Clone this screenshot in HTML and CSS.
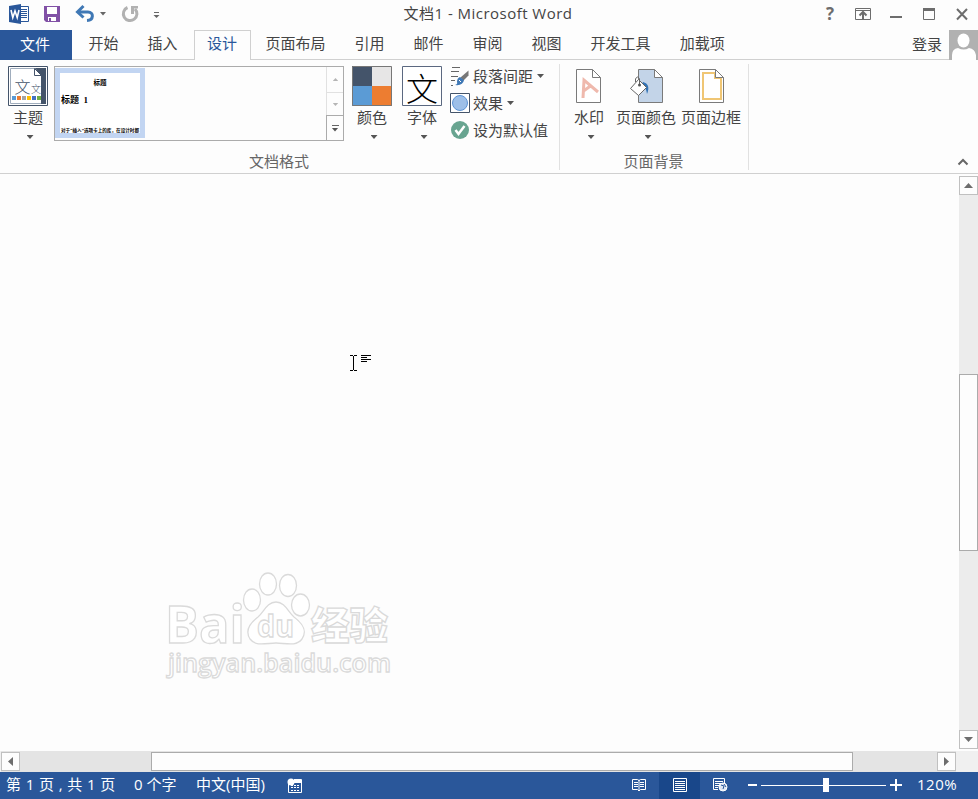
FILE: index.html
```
<!DOCTYPE html>
<html lang="zh-CN">
<head>
  <meta charset="UTF-8" />
  <meta name="viewport" content="width=device-width, initial-scale=1.0"/>
  <title>文档1 - Microsoft Word</title>
  <link rel="stylesheet" href="styles.css">
</head>
<body>
  <div class="window">
    <!-- Title bar -->
    <header class="titlebar">
      <div class="quick-access">
        <svg width="170" height="30" viewBox="0 0 170 30">
          <path d="M20 6.5h8.500v15H20z" fill="#fff" stroke="#2a579a"/>
          <path d="M21 9.500h6M21 11.500h6M21 13.500h6M21 15.500h6M21 17.500h6" stroke="#2a579a"/>
          <path d="M9 6l12-2v20L9 22z" fill="#2a579a"/>
          <path d="M11 10l1.800 7.500L15 11l2.200 6.500L19 10" fill="none" stroke="#fff" stroke-width="1.600"/>
          <path d="M44 6h16v16H46l-2-2z" fill="#8151a6"/>
          <path d="M47 7h10v7H47zM48 17h8v4h-5v-3h-2v3h-1z" fill="#fff"/>
          <path d="M78 12h10c6 0 6 8-1 8.500" fill="none" stroke="#3f78b5" stroke-width="3"/>
          <path d="M83.500 6l-6 6 6 5.500" fill="none" stroke="#3f78b5" stroke-width="3"/>
          <path d="M100 12h6l-3 3.500z" fill="#666"/>
          <path d="M127.500 7.500a6.800 6.800 0 1 0 7.500 1.500" fill="none" stroke="#b1b1b1" stroke-width="3"/>
          <path d="M131 14V6h7v2.500h-4V14z" fill="#b1b1b1"/>
          <path d="M154 12.500h5" stroke="#666"/>
          <path d="M153.500 15h6l-3 3z" fill="#666"/>
        </svg>
      </div>
      <h1 class="title">文档1 - Microsoft Word</h1>
      <div class="window-buttons">
        <span class="help">?</span>
        <svg width="138" height="30" viewBox="840 0 138 30" fill="none" stroke="#6d6d6d">
          <path d="M855.500 8.500h15v11h-15zM855 10.500h16"/>
          <path d="M863 19v-6M859.500 15.500l3.500-3.500 3.500 3.500" stroke-width="2"/>
          <path d="M890 17h12" stroke-width="2"/>
          <path d="M923.500 9v10.500h11V9"/>
          <path d="M923 9.500h12" stroke-width="3"/>
          <path d="M957 9l10 10.500M967 9l-10 10.500" stroke-width="2"/>
        </svg>
      </div>
    </header>

    <!-- Tabs -->
    <nav class="tabs">
      <a class="tab-file">文件</a>
      <a class="tab">开始</a>
      <a class="tab">插入</a>
      <a class="tab active">设计</a>
      <a class="tab">页面布局</a>
      <a class="tab">引用</a>
      <a class="tab">邮件</a>
      <a class="tab">审阅</a>
      <a class="tab">视图</a>
      <a class="tab">开发工具</a>
      <a class="tab">加载项</a>
      <span class="login">登录</span>
      <svg class="avatar" width="29" height="30" viewBox="0 0 29 30">
        <path d="M0 0h29v30H0z" fill="#b1b1b1"/>
        <ellipse cx="14.500" cy="10.500" rx="6" ry="7" fill="#fff"/>
        <path d="M3 30v-5q0-6 6-7 6 3 11 0 6 1 7 7v5z" fill="#fff"/>
      </svg>
    </nav>

    <!-- Ribbon -->
    <section class="ribbon">
      <div class="group group-format">
        <div class="group-body">
          <div class="button themes">
            <svg width="40" height="40" viewBox="0 0 40 40">
              <path d="M.5.5h39v39H.5z" fill="#fff" stroke="#44546a"/>
              <path d="M2.500 2.500h35v35h-35z" fill="#fff" stroke="#a0adbd"/>
              <path d="M27 2h11v36h-5V10z" fill="#44546a"/>
              <path d="M26.500 2.500v7h7z" fill="#fff" stroke="#44546a"/>
              <text x="6.500" y="27" class="theme-glyph" font-size="16">文</text>
              <text x="23" y="27" class="theme-glyph" font-size="10">文</text>
              <path d="M4 30h4v4H4z" fill="#5b9bd5"/>
              <path d="M9 30h4v4H9z" fill="#ed7d31"/>
              <path d="M14 30h4v4h-4z" fill="#a5a5a5"/>
              <path d="M19 30h4v4h-4z" fill="#ffc000"/>
              <path d="M24 30h4v4h-4z" fill="#4472c4"/>
              <path d="M29 30h4v4h-4z" fill="#70ad47"/>
            </svg>
            <span>主题</span>
            <i class="caret"></i>
          </div>
          <div class="gallery">
            <div class="preview">
              <div class="preview-title">标题</div>
              <div class="preview-heading">标题&nbsp; 1</div>
              <svg class="preview-line" width="80" height="6"><text x="1" y="5" textLength="78" lengthAdjust="spacingAndGlyphs">对于“插入”选项卡上的库，在设计时都</text></svg>
            </div>
            <div class="gallery-scroll">
              <span class="scroll-step"><i class="arrow-up"></i></span>
              <span class="scroll-step"><i class="arrow-down"></i></span>
              <span class="scroll-more"><i class="caret"></i></span>
            </div>
          </div>
          <div class="button colors">
            <svg width="40" height="40" viewBox="0 0 40 40">
              <path d="M0 0h20v20H0z" fill="#44546a"/>
              <path d="M20 0h20v20H20z" fill="#e7e6e6"/>
              <path d="M0 20h20v20H0z" fill="#5b9bd5"/>
              <path d="M20 20h20v20H20z" fill="#ed7d31"/>
              <path d="M.5.5h39v39H.5z" fill="none" stroke="#777"/>
            </svg>
            <span>颜色</span>
            <i class="caret"></i>
          </div>
          <div class="button fonts">
            <svg width="40" height="40" viewBox="0 0 40 40">
              <path d="M.5.5h39v39H.5z" fill="#fff" stroke="#5b6880"/>
              <text x="4" y="34.500" class="font-glyph" font-size="32">文</text>
            </svg>
            <span>字体</span>
            <i class="caret"></i>
          </div>
          <div class="small-buttons">
            <div class="small-button">
              <svg width="20" height="20" viewBox="0 0 20 20">
                <path d="M2 1.500h8M1 5.500h8M1 10.500h7M1 14.500h4M1 19.500h2" stroke="#666"/>
                <path d="M18.500 4.500v5l-5 5-3-3z" fill="#777"/>
                <path d="M10 11l4 3q-1 6-9 5 3-1 2-3 0-4 3-5z" fill="#3f78b5"/>
                <path d="M9 14l2 2" stroke="#fff"/>
              </svg>
              <span>段落间距</span><i class="caret"></i>
            </div>
            <div class="small-button">
              <svg width="20" height="20" viewBox="0 0 20 20">
                <path d="M.5.5h19v19H.5z" fill="#fff" stroke="#44546a"/>
                <circle cx="10" cy="10" r="7.500" fill="#9dbfe8" stroke="#5b93d5"/>
              </svg>
              <span>效果</span><i class="caret"></i>
            </div>
            <div class="small-button">
              <svg width="20" height="20" viewBox="0 0 20 20">
                <circle cx="10" cy="10" r="9" fill="#68a490"/>
                <path d="M5.500 10l3 4 6-8" fill="none" stroke="#fff" stroke-width="2.500"/>
              </svg>
              <span>设为默认值</span>
            </div>
          </div>
        </div>
        <div class="group-label">文档格式</div>
      </div>

      <div class="group group-background">
        <div class="group-body">
          <div class="button page-button watermark-button">
            <svg width="34" height="40" viewBox="0 0 34 40">
              <path d="M4.500 3.500h16l8 8v25h-24z" fill="#fff" stroke="#7a7a7a"/>
              <path d="M20.500 3.500v8h8" fill="none" stroke="#7a7a7a"/>
              <path d="M11 32l1-18 14 12M11.500 25l7-5" fill="none" stroke="#efb9ad" stroke-width="3"/>
            </svg>
            <span>水印</span>
            <i class="caret"></i>
          </div>
          <div class="button page-button">
            <svg width="34" height="40" viewBox="0 0 34 40">
              <path d="M9.500 3.500h16l8 8v25h-24z" fill="#c3d4e8" stroke="#7a7a7a"/>
              <path d="M25.500 3.500v8h8z" fill="#fff" stroke="#7a7a7a"/>
              <path d="M14 16q8 2 4 12-1-7-5-10z" fill="#3373b5"/>
              <path d="M1.500 22.500l8-9 8 8-8 8z" fill="#fff" stroke="#666"/>
              <path d="M6.500 16v-3q2-4 4 0v6" fill="none" stroke="#666"/>
              <circle cx="10.500" cy="19" r="1.500" fill="#555"/>
            </svg>
            <span>页面颜色</span>
            <i class="caret"></i>
          </div>
          <div class="button page-button">
            <svg width="34" height="40" viewBox="0 0 34 40">
              <path d="M5.500 3.500h16l8 8v25h-24z" fill="#fff" stroke="#7a7a7a"/>
              <path d="M9 7h12v5h6v21H9z" fill="none" stroke="#f0c674" stroke-width="2"/>
              <path d="M21.500 3.500v8h8z" fill="#fff" stroke="#7a7a7a"/>
            </svg>
            <span>页面边框</span>
          </div>
        </div>
        <div class="group-label">页面背景</div>
      </div>
      <svg class="collapse" width="12" height="8" viewBox="0 0 12 8">
        <path d="M1.500 6.500l4.500-4.500 4.500 4.500" fill="none" stroke="#666" stroke-width="2"/>
      </svg>
    </section>

    <!-- Document -->
    <main class="workspace">
      <div class="document">
        <svg class="cursor" width="22" height="17" viewBox="0 0 22 17" stroke="#000" fill="none">
          <path d="M0 .5h3M4 .5h3M3.500 1v14M0 15.500h3M4 15.500h3M11 .5h10M11 2.500h6M11 4.500h10M11 6.500h6"/>
        </svg>
        <svg class="baidu" width="240" height="120" viewBox="160 565 240 120">
          <g fill="#fff" stroke="#dadada" stroke-width="1.300">
            <text x="165" y="643" class="logo-latin" font-size="52" textLength="80" lengthAdjust="spacingAndGlyphs">Bai</text>
            <ellipse cx="252" cy="600" rx="8.500" ry="11"/>
            <ellipse cx="268" cy="584" rx="8.500" ry="11"/>
            <ellipse cx="288" cy="585.500" rx="8.500" ry="11"/>
            <ellipse cx="300.500" cy="605" rx="9" ry="11"/>
            <path d="M276 602c9 0 12 10 18 15 8 6 14 13 8 22-6 8-17 4-26 4s-20 4-26-4c-5-8 0-16 8-22 6-5 9-15 18-15z"/>
            <text x="257" y="637" class="logo-latin" font-size="31" textLength="37" lengthAdjust="spacingAndGlyphs">du</text>
            <text x="311" y="639" class="logo-cjk" font-size="38" textLength="77" lengthAdjust="spacingAndGlyphs">经验</text>
            <text x="168" y="672" class="logo-url" font-size="25" textLength="223" lengthAdjust="spacingAndGlyphs">jingyan.baidu.com</text>
          </g>
        </svg>
      </div>
      <div class="vscroll">
        <span class="scroll-button"><i class="arrow-up"></i></span>
        <span class="vthumb"></span>
        <span class="scroll-button"><i class="arrow-down"></i></span>
      </div>
    </main>
    <div class="hscroll-row">
      <div class="hscroll">
        <span class="scroll-button"><i class="arrow-left"></i></span>
        <span class="hthumb"></span>
        <span class="scroll-button"><i class="arrow-right"></i></span>
      </div>
    </div>

    <!-- Status bar -->
    <footer class="statusbar">
      <span class="status-page">第 1 页 , 共 1 页</span>
      <span class="status-words">0 个字</span>
      <span class="status-lang">中文(中国)</span>
      <svg width="16" height="16" viewBox="0 0 16 16">
        <path d="M1.500 6v8.500h13v-13H7" fill="none" stroke="#fff"/>
        <path d="M7 2h8v3H7z" fill="#fff"/>
        <circle cx="4" cy="4" r="3.500" fill="#fff"/>
        <path d="M4 7.500h9M4 9.500h9M4 12.500h9" stroke="#fff" stroke-dasharray="2 1"/>
      </svg>
      <div class="views">
        <span class="view">
          <svg width="14" height="14" viewBox="0 0 14 14" fill="none" stroke="#fff">
            <path d="M.5 1.500h5l1.500 1 1.500-1h5v10h-5L7 13l-1.500-1.500h-5zM7 2v11M2 4.500h4M2 6.500h4M2 8.500h4M8 4.500h4M8 6.500h4M8 8.500h4"/>
          </svg>
        </span>
        <span class="view current">
          <svg width="14" height="14" viewBox="0 0 14 14" fill="none" stroke="#fff">
            <path d="M.5.500h13v13H.5zM2 3.500h10M2 5.500h10M2 7.500h10M2 9.500h10M2 11.500h10"/>
          </svg>
        </span>
        <span class="view">
          <svg width="15" height="14" viewBox="0 0 15 14" fill="none" stroke="#fff">
            <path d="M5 11.500H.5V.5h11V5M2 3.500h8M2 5.500h6M2 7.500h4M2 9.500h3"/>
            <circle cx="10" cy="9" r="4" fill="#dfe7f3"/>
            <path d="M8 7l3 1-1 3M11 6l2 3" stroke="#2a579a"/>
          </svg>
        </span>
      </div>
      <svg class="zoom" width="154" height="26" viewBox="748 773 154 26" fill="#fff">
        <path d="M748 784h9v2h-9zM761 785h125v1H761zM823 778h6v14h-6zM890 784h12v2h-12zM895 779h2v12h-2z"/>
      </svg>
      <span class="percent">120%</span>
    </footer>
  </div>
</body>
</html>
```
FILE: styles.css
```
* {
  box-sizing: border-box;
}
body {
  margin: 0;
  font-family: "Open Sans", "Noto Sans CJK SC", sans-serif;
  font-size: 15px;
  line-height: 20px;
  color: #444;
}
svg {
  display: block;
  flex: none;
}
.window {
  display: flex;
  flex-direction: column;
  width: 978px;
  height: 799px;
  background: #fdfdfd;
  overflow: hidden;
  white-space: nowrap;
}

/* title bar */
.titlebar {
  display: grid;
  grid-template-columns: 1fr auto 1fr;
  height: 30px;
}
.title {
  margin: 0;
  padding: 3px 2px 0 0;
  font-size: 15px;
  font-weight: normal;
  letter-spacing: 0.47px;
}
.window-buttons {
  display: flex;
  justify-content: flex-end;
}
.help {
  width: 14px;
  padding-top: 4px;
  font-size: 17px;
  font-weight: bold;
  color: #6d6d6d;
}

/* tabs */
.tabs {
  display: flex;
  height: 30px;
  border-bottom: 1px solid #d0d0d0;
}
.tab-file {
  width: 72px;
  height: 30px;
  margin-right: 2px;
  padding: 4px 2px 0 0;
  text-align: center;
  color: #fff;
  background: #2a579a;
}
.tab {
  height: 30px;
  padding: 3px 14.5px 0;
}
.tab.active {
  margin: 0 0 0 2px;
  padding: 2px 12.5px 0 12px;
  width: 57px;
  color: #2a579a;
  background: #fdfdfd;
  border: 1px solid #d0d0d0;
  border-bottom: none;
}
.login {
  margin-left: auto;
  padding: 4px 7px 0 0;
}

/* ribbon */
.ribbon {
  display: flex;
  height: 114px;
  border-bottom: 1px solid #d0d0d0;
}
.group {
  height: 106px;
  margin-top: 4px;
  border-right: 1px solid #e1e1e1;
}
.group-format {
  width: 560px;
}
.group-background {
  width: 189px;
}
.group-body {
  display: flex;
  height: 86px;
  padding-top: 2px;
}
.group-label {
  padding: 1px 1px 0 0;
  text-align: center;
  color: #666;
}
.button {
  display: flex;
  flex-direction: column;
  align-items: center;
  width: 40px;
}
.button > span {
  margin-top: 1px;
}
.button > .caret {
  margin: 8px 0 0 4px;
}
.themes {
  margin-left: 8px;
}
.colors {
  margin-left: 8px;
}
.fonts {
  margin-left: 10px;
}
.theme-glyph {
  font-family: "Noto Sans CJK SC", sans-serif;
  font-weight: 300;
  fill: #44546a;
}
.font-glyph {
  font-family: "Noto Sans CJK SC", sans-serif;
  font-weight: 300;
  fill: #000;
}
.caret {
  flex: none;
  width: 7px;
  height: 4px;
  background: #555;
  clip-path: polygon(0 0, 100% 0, 50% 100%);
}
.gallery {
  display: flex;
  justify-content: space-between;
  width: 290px;
  height: 75px;
  margin-left: 6px;
  border: 1px solid #ababab;
}
.preview {
  width: 90px;
  height: 70px;
  margin-top: 1px;
  border: 5px solid #c2d5f2;
  background: #fff;
  font-family: "Liberation Serif", "Noto Sans CJK SC", sans-serif;
  font-weight: bold;
  color: #000;
}
.preview-title {
  height: 19px;
  text-align: center;
  font-size: 6.5px;
  line-height: 19px;
}
.preview-heading {
  height: 35px;
  padding-left: 1px;
  font-size: 9px;
  line-height: 16px;
}
.preview-line {
  font-size: 4.2px;
}
.gallery-scroll {
  display: flex;
  flex-direction: column;
  width: 17px;
}
.gallery-scroll span {
  display: flex;
  align-items: center;
  justify-content: center;
}
.scroll-step {
  height: 26px;
  border-left: 1px solid #e1e1e1;
  border-bottom: 1px solid #e1e1e1;
}
.scroll-step + .scroll-step {
  height: 22px;
  border-bottom: none;
}
.scroll-step i {
  transform: scale(0.6);
  opacity: 0.5;
}
.gallery-scroll .scroll-more {
  flex: 1;
  border-top: 1px solid #ababab;
  border-left: 1px solid #ababab;
  flex-direction: column;
  gap: 2px;
}
.scroll-more::before {
  content: "";
  width: 7px;
  height: 1px;
  background: #666;
}
.small-buttons {
  display: flex;
  flex-direction: column;
  gap: 7px;
  margin-left: 8px;
}
.small-button {
  display: flex;
  align-items: center;
  height: 20px;
}
.small-button span {
  margin: 0 4px 0 3px;
}
.page-button {
  width: auto;
  margin-left: 5px;
}
.watermark-button {
  margin: 0 5px 0 12px;
}
.collapse {
  margin: 98px 9px 0 auto;
}

/* document */
.workspace {
  display: flex;
  height: 577px;
}
.document {
  position: relative;
  flex: 1;
}
.cursor {
  position: absolute;
  left: 350px;
  top: 181px;
}
.baidu {
  position: absolute;
  left: 160px;
  top: 391px;
}
.logo-latin {
  font-family: "Open Sans", sans-serif;
  font-weight: bold;
}
.logo-cjk {
  font-family: "Noto Sans CJK SC", sans-serif;
  font-weight: 900;
}
.logo-url {
  font-family: "Open Sans", sans-serif;
  font-weight: 600;
}

/* scroll bars */
.vscroll {
  display: flex;
  flex-direction: column;
  justify-content: space-between;
  width: 19px;
  height: 573px;
  margin-top: 2px;
  background: #ececec;
}
.scroll-button {
  display: flex;
  align-items: center;
  justify-content: center;
  width: 19px;
  height: 19px;
  background: #fdfdfd;
  border: 1px solid #c0c0c0;
}
.vthumb {
  height: 177px;
  background: #fdfdfd;
  border: 1px solid #ababab;
}
.hscroll-row {
  height: 21px;
  padding-left: 1px;
  background: #f0f0f0;
}
.hscroll {
  display: flex;
  align-items: center;
  width: 955px;
  height: 21px;
  background: #e4e4e4;
}
.hthumb {
  width: 702px;
  height: 19px;
  margin: 0 auto 0 131px;
  background: #fdfdfd;
  border: 1px solid #ababab;
}
.arrow-up,
.arrow-down {
  width: 9px;
  height: 5px;
  background: #6d6d6d;
}
.arrow-up {
  clip-path: polygon(50% 0, 100% 100%, 0 100%);
}
.arrow-down {
  clip-path: polygon(0 0, 100% 0, 50% 100%);
}
.arrow-left,
.arrow-right {
  width: 5px;
  height: 9px;
  background: #6d6d6d;
}
.arrow-left {
  clip-path: polygon(0 50%, 100% 0, 100% 100%);
}
.arrow-right {
  clip-path: polygon(0 0, 100% 50%, 0 100%);
}

/* status bar */
.statusbar {
  display: flex;
  align-items: center;
  height: 27px;
  padding-left: 6px;
  color: #fff;
  background: #2a579a;
}
.statusbar > span {
  padding-bottom: 3px;
}
.status-page {
  width: 128px;
  word-spacing: 0.8px;
}
.status-words {
  width: 62px;
}
.status-lang {
  width: 91px;
}
.views {
  display: flex;
  align-self: stretch;
  margin-left: 315px;
}
.view {
  display: flex;
  align-items: center;
  justify-content: center;
  width: 41px;
  padding-bottom: 2px;
}
.view.current {
  background: #19478a;
}
.zoom {
  margin-left: 7px;
}
.percent {
  margin-left: 15px;
  letter-spacing: 0.5px;
}
```
